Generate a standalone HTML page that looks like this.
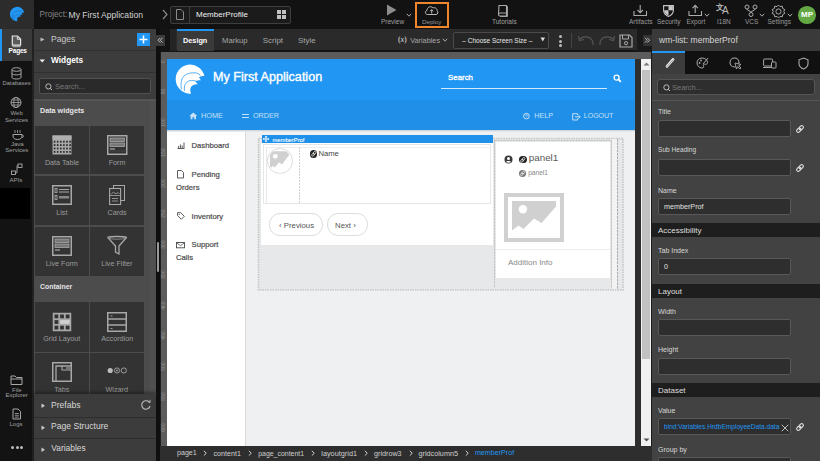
<!DOCTYPE html>
<html><head><meta charset="utf-8">
<style>
*{margin:0;padding:0;box-sizing:border-box}
html,body{width:820px;height:461px;overflow:hidden;background:#121212;font-family:"Liberation Sans",sans-serif}
.a{position:absolute}
.t{position:absolute;white-space:nowrap;line-height:1}
svg{position:absolute;overflow:visible}
</style></head><body>
<!-- TOP BAR -->
<div class="a" style="left:0;top:0;width:820px;height:29px;background:#121212"></div>
<div class="a" style="left:0;top:0;width:34px;height:29px;background:#2c2c2c"></div>


<svg style="left:9.5px;top:7px" width="15" height="15" viewBox="0 0 30 30"><path d="M28.4 11.1 A14.5 14.5 0 1 0 15.1 28.6 C13.8 26 14 22.8 15.5 21.2 C17 19.8 19.5 19 21.8 19.3 C20.8 18 20 17.2 19.4 16.5 C21 15.4 23 15.1 24.9 15.4 C24.2 14 23.6 13 23 12.2 C24.8 11.2 26.6 10.9 28.4 11.1 Z" fill="#2196f3"/><path d="M5.4 24.3 C4.5 19 5 14 8 11 C11 8 17 7.2 21.8 8.3 C23 8.7 23.6 9.6 24.1 10.7" fill="none" stroke="#1a6fb8" stroke-width="1.2"/><path d="M8.5 25.9 C8 22 8.6 19.5 10.5 17.5 C13 15 17.5 15 21 16.5 C21.4 16.9 21.6 17.5 21.8 18.1" fill="none" stroke="#1a6fb8" stroke-width="1.2"/></svg>
<div class="t" style="left:39.5px;top:11.2px;font-size:8.2px;color:#858585">Project:</div>
<div class="t" style="left:68.5px;top:11px;font-size:8.6px;color:#d2d2d2">My First Application</div>
<svg style="left:161px;top:9px" width="8" height="11"><path d="M2 1 L6 5.5 L2 10" fill="none" stroke="#8a8a8a" stroke-width="1.2"/></svg>
<div class="a" style="left:170px;top:6px;width:121px;height:18px;border:1px solid #3e3e3e;border-radius:2px;background:#1b1b1b"></div>
<div class="a" style="left:189px;top:7px;width:1px;height:16px;background:#3e3e3e"></div>
<svg style="left:175px;top:8px" width="10" height="13"><path d="M1.5 1.5 H6 L8.5 4 V11.5 H1.5 Z" fill="none" stroke="#8a8a8a" stroke-width="1"/></svg>
<div class="t" style="left:196px;top:11px;font-size:8px;color:#f0f0f0">MemberProfile</div>
<div class="a" style="left:277px;top:10px;width:4px;height:4px;background:#c0c0c0"></div>
<div class="a" style="left:282px;top:10px;width:4px;height:4px;background:#c0c0c0"></div>
<div class="a" style="left:277px;top:15px;width:4px;height:4px;background:#c0c0c0"></div>
<div class="a" style="left:282px;top:15px;width:4px;height:4px;background:#c0c0c0"></div>

<svg style="left:386px;top:4px" width="12" height="13"><path d="M1 0.5 L10.5 6 L1 11.5 Z" fill="#8c8c8c"/></svg>
<div class="t" style="left:381px;top:18.5px;font-size:6.5px;color:#a0a0a0">Preview</div>
<svg style="left:406px;top:13px" width="7" height="5"><path d="M0.8 0.8 L3 3.2 L5.2 0.8" fill="none" stroke="#aaa" stroke-width="1"/></svg>
<div class="a" style="left:415px;top:2px;width:34px;height:26px;border:2px solid #f0872e"></div>
<svg style="left:424px;top:4px" width="15" height="12"><path d="M3.5 10.5 C1 10.5 0.6 7 3 6.5 C3 3 7 1.5 9 4 C11.5 3 13.5 5 13 7 C14.5 7.5 14 10.5 12 10.5 Z" fill="none" stroke="#bbb" stroke-width="1"/><path d="M7.7 9.5 V5.8 M6.2 7.2 L7.7 5.6 L9.2 7.2" fill="none" stroke="#bbb" stroke-width="1"/></svg>
<div class="t" style="left:422px;top:18.5px;font-size:6.2px;color:#989898">Deploy</div>
<svg style="left:497px;top:4px" width="13" height="13"><path d="M2 1.5 H9.5 V12 H3 C2 12 1.5 11.5 1.5 10.5 Z M1.5 10.5 C1.5 9.5 2 9 3 9 H9.5" fill="none" stroke="#aaa" stroke-width="1.1"/><path d="M9.5 1.5 L10.5 2.5 V12.5 H3" fill="none" stroke="#aaa" stroke-width="0.9"/></svg>
<div class="t" style="left:492px;top:18.5px;font-size:6.5px;color:#a0a0a0">Tutorials</div>

<svg style="left:633px;top:4px" width="15" height="13"><path d="M1 7 V11.5 H13.5 V7" fill="none" stroke="#aaa" stroke-width="1.1"/><path d="M7.2 1 V8.5 M4.5 6 L7.2 8.7 L9.9 6" fill="none" stroke="#aaa" stroke-width="1.1"/></svg>
<div class="t" style="left:629px;top:18.5px;font-size:6.5px;color:#9a9a9a">Artifacts</div>
<svg style="left:662.5px;top:4.5px" width="12" height="13"><path d="M0.6 0.6 H10.4 V5.2 C10.4 8.2 8 10.4 5.5 11.5 C3 10.4 0.6 8.2 0.6 5.2 Z" fill="#151515" stroke="#c4c4c4" stroke-width="1.1"/><path d="M5.5 1.1 H9.9 V5.3 H5.5 Z" fill="#c8c8c8"/><path d="M1.1 5.3 H5.5 V10.8 C3.2 9.8 1.1 7.8 1.1 5.3 Z" fill="#c8c8c8"/></svg>
<div class="t" style="left:657px;top:18.5px;font-size:6.5px;color:#9a9a9a">Security</div>
<svg style="left:688px;top:4px" width="15" height="13"><path d="M1 7 V11.5 H13.5 V7" fill="none" stroke="#aaa" stroke-width="1.1"/><path d="M7.2 9 V1.5 M4.5 4.2 L7.2 1.4 L9.9 4.2" fill="none" stroke="#aaa" stroke-width="1.1"/></svg>
<div class="t" style="left:686.5px;top:18.5px;font-size:6.5px;color:#9a9a9a">Export</div>
<svg style="left:704px;top:13px" width="7" height="5"><path d="M0.8 0.8 L3 3.2 L5.2 0.8" fill="none" stroke="#aaa" stroke-width="1"/></svg>
<div class="t" style="left:716px;top:4px;font-size:8px;color:#bbb;font-weight:bold">文</div>
<div class="t" style="left:722px;top:6px;font-size:10px;color:#bbb">A</div>
<div class="t" style="left:717px;top:18.5px;font-size:6.5px;color:#9a9a9a">I18N</div>
<svg style="left:744px;top:4px" width="14" height="13"><circle cx="3" cy="3" r="2" fill="none" stroke="#aaa" stroke-width="1"/><circle cx="11" cy="3" r="2" fill="none" stroke="#aaa" stroke-width="1"/><circle cx="7" cy="10.5" r="2" fill="none" stroke="#aaa" stroke-width="1"/><path d="M3 5 C3 7 7 6.5 7 8.5 M11 5 C11 7 7 6.5 7 8.5" fill="none" stroke="#aaa" stroke-width="1"/></svg>
<div class="t" style="left:745px;top:18.5px;font-size:6.5px;color:#9a9a9a">VCS</div>
<svg style="left:759px;top:13px" width="7" height="5"><path d="M0.8 0.8 L3 3.2 L5.2 0.8" fill="none" stroke="#aaa" stroke-width="1"/></svg>
<svg style="left:771px;top:4px" width="15" height="14"><path d="M7.5 1 L9 2.6 L11.3 2.2 L11.7 4.5 L13.8 5.6 L12.8 7.5 L13.8 9.4 L11.7 10.5 L11.3 12.8 L9 12.4 L7.5 14 L6 12.4 L3.7 12.8 L3.3 10.5 L1.2 9.4 L2.2 7.5 L1.2 5.6 L3.3 4.5 L3.7 2.2 L6 2.6 Z" fill="none" stroke="#aaa" stroke-width="1"/><circle cx="7.5" cy="7.5" r="2.6" fill="none" stroke="#aaa" stroke-width="1"/></svg>
<div class="t" style="left:767.5px;top:18.5px;font-size:6.5px;color:#9a9a9a">Settings</div>
<svg style="left:787px;top:13px" width="7" height="5"><path d="M0.8 0.8 L3 3.2 L5.2 0.8" fill="none" stroke="#aaa" stroke-width="1"/></svg>
<div class="a" style="left:798px;top:6px;width:17.5px;height:17.5px;border-radius:50%;background:#64a846"></div>
<div class="t" style="left:799px;top:11px;width:16px;text-align:center;font-size:8px;color:#fff;font-weight:bold">MP</div>

<!-- LEFT RAIL -->
<div class="a" style="left:0;top:29px;width:34px;height:432px;background:#131313"></div>
<div class="a" style="left:0;top:29px;width:32px;height:32px;background:#3a3a3a"></div>
<div class="a" style="left:32px;top:29px;width:2.5px;height:432px;background:#222"></div>
<div class="a" style="left:0;top:29px;width:1.5px;height:32px;background:#2196f3"></div>
<div class="a" style="left:0;top:188px;width:30px;height:31px;background:#000"></div>
<svg style="left:11px;top:35px" width="11" height="13"><path d="M1.3 1 H6.5 L9.6 4.1 V10.2 H1.3 Z" fill="#5a5a5a" stroke="#e6e6e6" stroke-width="1.2"/><path d="M6.3 1.2 V4.3 H9.4" fill="none" stroke="#e6e6e6" stroke-width="0.9"/><path d="M1.5 11.6 H9.4" stroke="#aaa" stroke-width="1.3"/></svg>
<div class="t" style="left:8.6px;top:48.3px;font-size:6.6px;color:#fff;font-weight:bold;letter-spacing:-0.25px">Pages</div>
<svg style="left:11px;top:67px" width="12" height="14"><ellipse cx="5.5" cy="2.5" rx="4.5" ry="1.8" fill="none" stroke="#a8a8a8" stroke-width="1"/><path d="M1 2.5 V10.5 C1 12.5 10 12.5 10 10.5 V2.5 M1 6.5 C1 8.3 10 8.3 10 6.5" fill="none" stroke="#a8a8a8" stroke-width="1"/></svg>
<div class="t" style="left:2.5px;top:80.5px;font-size:5.9px;color:#a0a0a0">Databases</div>
<svg style="left:10px;top:97px" width="13" height="12"><circle cx="6" cy="5.5" r="5" fill="none" stroke="#a8a8a8" stroke-width="1"/><ellipse cx="6" cy="5.5" rx="2.2" ry="5" fill="none" stroke="#a8a8a8" stroke-width="0.8"/><path d="M1 5.5 H11 M1.8 3 H10.2 M1.8 8 H10.2" stroke="#a8a8a8" stroke-width="0.8"/></svg>
<div class="t" style="left:10.5px;top:110px;font-size:6px;color:#a0a0a0">Web</div>
<div class="t" style="left:5px;top:116.5px;font-size:6px;color:#a0a0a0">Services</div>
<svg style="left:10.5px;top:129px" width="14" height="12"><path d="M4 1 V4 M6.5 1 V4 M9 1 V4" stroke="#a8a8a8" stroke-width="0.8"/><path d="M2 5.5 H11 V7 C11 9.5 9 10.5 6.5 10.5 C4 10.5 2 9.5 2 7 Z" fill="none" stroke="#a8a8a8" stroke-width="1"/><path d="M11 6 C13 6 13 8.5 11 8.5" fill="none" stroke="#a8a8a8" stroke-width="0.9"/></svg>
<div class="t" style="left:11px;top:141px;font-size:6px;color:#a0a0a0">Java</div>
<div class="t" style="left:5.3px;top:147px;font-size:6px;color:#a0a0a0">Services</div>
<svg style="left:10px;top:163px" width="14" height="13"><rect x="8" y="1" width="4" height="3.5" fill="none" stroke="#a8a8a8" stroke-width="0.9"/><rect x="1.5" y="8" width="4" height="3.5" fill="none" stroke="#a8a8a8" stroke-width="0.9"/><path d="M5.5 9.7 H7 V2.7 H8" fill="none" stroke="#a8a8a8" stroke-width="0.9"/></svg>
<div class="t" style="left:9.5px;top:177px;font-size:6px;color:#a0a0a0">APIs</div>
<svg style="left:10px;top:373.5px" width="14" height="12"><path d="M1 2 H5 L6.5 3.5 H12 V10.5 H1 Z M1 5 H12" fill="none" stroke="#a8a8a8" stroke-width="1"/></svg>
<div class="t" style="left:12px;top:386.6px;font-size:6px;color:#a0a0a0">File</div>
<div class="t" style="left:5.5px;top:392.3px;font-size:6px;color:#a0a0a0">Explorer</div>
<svg style="left:12px;top:407.5px" width="10" height="12"><path d="M1 1 H6 L8.5 3.5 V11 H1 Z" fill="none" stroke="#a8a8a8" stroke-width="1"/><path d="M2.8 5.5 H6.8 M2.8 7.3 H6.8 M2.8 9.1 H6.8" stroke="#a8a8a8" stroke-width="0.8"/></svg>
<div class="t" style="left:9.5px;top:421px;font-size:6px;color:#a0a0a0">Logs</div>
<div class="a" style="left:11px;top:446px;width:3px;height:3px;border-radius:50%;background:#bbb"></div>
<div class="a" style="left:15.5px;top:446px;width:3px;height:3px;border-radius:50%;background:#bbb"></div>
<div class="a" style="left:20px;top:446px;width:3px;height:3px;border-radius:50%;background:#bbb"></div>

<!-- LEFT PANEL -->
<div class="a" style="left:34px;top:29px;width:122px;height:432px;background:#4c4c4c"></div>
<div class="a" style="left:150px;top:99px;width:6px;height:296px;background:#505050"></div>
<div class="a" style="left:34px;top:29px;width:122px;height:70px;background:#3c3c3c"></div>
<div class="a" style="left:34px;top:50px;width:122px;height:1px;background:#303030"></div>
<div class="a" style="left:34px;top:72px;width:122px;height:1px;background:#303030"></div>
<div class="a" style="left:34px;top:98px;width:122px;height:1px;background:#383838"></div>
<div class="a" style="left:34px;top:99px;width:122px;height:2px;background:#555"></div>
<svg style="left:40px;top:37px" width="6" height="6"><path d="M0.5 0.5 L4.5 2.5 L0.5 4.5 Z" fill="#bbb"/></svg>
<div class="t" style="left:51px;top:34.5px;font-size:8.6px;color:#c8c8c8">Pages</div>
<div class="a" style="left:137px;top:33px;width:13px;height:13px;background:#2196f3"></div>
<svg style="left:137px;top:33px" width="13" height="13"><path d="M6.5 2.5 V10.5 M2.5 6.5 H10.5" stroke="#fff" stroke-width="1.5"/></svg>
<svg style="left:39px;top:59px" width="7" height="5"><path d="M0.5 0.5 H6 L3.25 3.5 Z" fill="#eee"/></svg>
<div class="t" style="left:51px;top:56px;font-size:8.3px;color:#fff;font-weight:bold">Widgets</div>
<div class="a" style="left:39px;top:78px;width:112px;height:16px;background:#2a2a2a;border:1px solid #505050;border-radius:2px"></div>
<svg style="left:45px;top:82.5px" width="9" height="9"><circle cx="3.4" cy="3.4" r="2.6" fill="none" stroke="#c8c8c8" stroke-width="0.9"/><path d="M5.3 5.3 L7 7" stroke="#c8c8c8" stroke-width="1"/></svg>
<div class="t" style="left:55px;top:82.5px;font-size:7.5px;color:#777">Search...</div>
<div class="t" style="left:40px;top:106.7px;font-size:7.2px;color:#e6e6e6;font-weight:bold">Data widgets</div>
<div class="t" style="left:40px;top:284.2px;font-size:6.9px;color:#e6e6e6;font-weight:bold">Container</div>
<div class="a" style="left:35px;top:126px;width:54px;height:48px;background:#333"></div>
<div class="a" style="left:90px;top:126px;width:54px;height:48px;background:#333"></div>
<div class="a" style="left:35px;top:176px;width:54px;height:49px;background:#333"></div>
<div class="a" style="left:90px;top:176px;width:54px;height:49px;background:#333"></div>
<div class="a" style="left:35px;top:227px;width:54px;height:49px;background:#333"></div>
<div class="a" style="left:90px;top:227px;width:54px;height:49px;background:#333"></div>
<div class="a" style="left:35px;top:302px;width:54px;height:50px;background:#333"></div>
<div class="a" style="left:90px;top:302px;width:54px;height:50px;background:#333"></div>
<div class="a" style="left:35px;top:353px;width:54px;height:47px;background:#333"></div>
<div class="a" style="left:90px;top:353px;width:54px;height:47px;background:#333"></div>
<div class="t" style="left:22.0px;width:80px;text-align:center;top:159px;font-size:7.2px;color:#9c9c9c">Data Table</div>
<div class="t" style="left:77.05px;width:80px;text-align:center;top:159px;font-size:7.2px;color:#9c9c9c">Form</div>
<div class="t" style="left:21.85px;width:80px;text-align:center;top:209px;font-size:7.2px;color:#9c9c9c">List</div>
<div class="t" style="left:77.1px;width:80px;text-align:center;top:209px;font-size:7.2px;color:#9c9c9c">Cards</div>
<div class="t" style="left:21.85px;width:80px;text-align:center;top:260px;font-size:7.2px;color:#9c9c9c">Live Form</div>
<div class="t" style="left:76.85px;width:80px;text-align:center;top:260px;font-size:7.2px;color:#9c9c9c">Live Filter</div>
<div class="t" style="left:21.75px;width:80px;text-align:center;top:335px;font-size:7.2px;color:#9c9c9c">Grid Layout</div>
<div class="t" style="left:77.19999999999999px;width:80px;text-align:center;top:335px;font-size:7.2px;color:#9c9c9c">Accordion</div>
<div class="t" style="left:21.800000000000004px;width:80px;text-align:center;top:385.5px;font-size:7.2px;color:#9c9c9c">Tabs</div>
<div class="t" style="left:76.75px;width:80px;text-align:center;top:385.5px;font-size:7.2px;color:#9c9c9c">Wizard</div>
<svg style="left:52px;top:134.5px" width="20" height="20"><rect x="0.5" y="0.5" width="19" height="19" fill="#a8a8a8"/><rect x="0.5" y="0.5" width="19" height="4" fill="#b0b0b0"/><rect x="1.8" y="5.8" width="1.6" height="1.8" fill="#2a2a2a"/><rect x="4.9" y="5.8" width="1.6" height="1.8" fill="#2a2a2a"/><rect x="8.0" y="5.8" width="1.6" height="1.8" fill="#2a2a2a"/><rect x="11.100000000000001" y="5.8" width="1.6" height="1.8" fill="#2a2a2a"/><rect x="14.200000000000001" y="5.8" width="1.6" height="1.8" fill="#2a2a2a"/><rect x="17.3" y="5.8" width="1.6" height="1.8" fill="#2a2a2a"/><rect x="1.8" y="9.2" width="1.6" height="1.8" fill="#2a2a2a"/><rect x="4.9" y="9.2" width="1.6" height="1.8" fill="#2a2a2a"/><rect x="8.0" y="9.2" width="1.6" height="1.8" fill="#2a2a2a"/><rect x="11.100000000000001" y="9.2" width="1.6" height="1.8" fill="#2a2a2a"/><rect x="14.200000000000001" y="9.2" width="1.6" height="1.8" fill="#2a2a2a"/><rect x="17.3" y="9.2" width="1.6" height="1.8" fill="#2a2a2a"/><rect x="1.8" y="12.6" width="1.6" height="1.8" fill="#2a2a2a"/><rect x="4.9" y="12.6" width="1.6" height="1.8" fill="#2a2a2a"/><rect x="8.0" y="12.6" width="1.6" height="1.8" fill="#2a2a2a"/><rect x="11.100000000000001" y="12.6" width="1.6" height="1.8" fill="#2a2a2a"/><rect x="14.200000000000001" y="12.6" width="1.6" height="1.8" fill="#2a2a2a"/><rect x="17.3" y="12.6" width="1.6" height="1.8" fill="#2a2a2a"/><rect x="1.8" y="16.0" width="1.6" height="1.8" fill="#2a2a2a"/><rect x="4.9" y="16.0" width="1.6" height="1.8" fill="#2a2a2a"/><rect x="8.0" y="16.0" width="1.6" height="1.8" fill="#2a2a2a"/><rect x="11.100000000000001" y="16.0" width="1.6" height="1.8" fill="#2a2a2a"/><rect x="14.200000000000001" y="16.0" width="1.6" height="1.8" fill="#2a2a2a"/><rect x="17.3" y="16.0" width="1.6" height="1.8" fill="#2a2a2a"/></svg>
<svg style="left:107px;top:134.5px" width="21" height="20"><rect x="0.75" y="0.75" width="19" height="18.5" fill="none" stroke="#a8a8a8" stroke-width="1.5"/><rect x="3" y="3" width="14.5" height="3.5" fill="#777" stroke="#a8a8a8" stroke-width="0.8"/><rect x="3" y="8" width="14.5" height="3.5" fill="#777" stroke="#a8a8a8" stroke-width="0.8"/><path d="M3 14 H8" stroke="#a8a8a8" stroke-width="1.2"/><path d="M1 16 H19.5" stroke="#555" stroke-width="0.6"/></svg>
<svg style="left:52px;top:185px" width="20" height="20"><rect x="0.75" y="0.75" width="18.5" height="18.5" fill="none" stroke="#a8a8a8" stroke-width="1.5"/><rect x="3" y="3.5" width="2" height="4" fill="none" stroke="#a8a8a8" stroke-width="0.9"/><rect x="3" y="10.5" width="2" height="4" fill="none" stroke="#a8a8a8" stroke-width="0.9"/><path d="M7 4.5 H17 M7 7 H17 M7 12.5 H17" stroke="#a8a8a8" stroke-width="1"/><rect x="7" y="11" width="10" height="2.5" fill="#888"/></svg>
<svg style="left:109px;top:185px" width="16" height="20"><rect x="4.5" y="0.5" width="11" height="15" fill="none" stroke="#a8a8a8" stroke-width="1"/><rect x="0.6" y="3.5" width="11" height="16" fill="#333" stroke="#a8a8a8" stroke-width="1.1"/><path d="M2 9.5 L4.5 7 L7 9 L9 7.5 L10.5 9" fill="none" stroke="#a8a8a8" stroke-width="0.8"/><path d="M1 10.5 H11 M3 13.5 H9 M3 16 H9" stroke="#a8a8a8" stroke-width="0.8"/></svg>
<svg style="left:52px;top:235.5px" width="20" height="20"><rect x="0.75" y="0.75" width="18.5" height="18.5" fill="none" stroke="#a8a8a8" stroke-width="1.5"/><rect x="3" y="3" width="14" height="3.5" fill="#777" stroke="#a8a8a8" stroke-width="0.8"/><rect x="3" y="8" width="14" height="3.5" fill="#777" stroke="#a8a8a8" stroke-width="0.8"/><path d="M3 14 H8" stroke="#a8a8a8" stroke-width="1.2"/></svg>
<svg style="left:107px;top:236px" width="21" height="19"><path d="M0.8 1.5 C0.8 0 19.5 0 19.5 1.5 L12 10 V18 L8.5 16 V10 Z" fill="none" stroke="#a8a8a8" stroke-width="1.3"/><ellipse cx="10.1" cy="2" rx="8" ry="1.2" fill="none" stroke="#a8a8a8" stroke-width="0.7"/></svg>
<svg style="left:52px;top:311.5px" width="20" height="20"><rect x="0.75" y="0.75" width="18.5" height="18.5" fill="#a8a8a8"/><rect x="2.5" y="2.5" width="3.8" height="3.8" fill="#333"/><rect x="8.1" y="2.5" width="3.8" height="3.8" fill="#333"/><rect x="13.7" y="2.5" width="3.8" height="3.8" fill="#333"/><rect x="2.5" y="8.1" width="3.8" height="3.8" fill="#333"/><rect x="2.5" y="13.7" width="3.8" height="3.8" fill="#333"/><rect x="8.1" y="13.7" width="3.8" height="3.8" fill="#333"/><rect x="13.7" y="13.7" width="3.8" height="3.8" fill="#333"/><rect x="8.1" y="8.1" width="9.4" height="3.8" fill="#cfcfcf"/></svg>
<svg style="left:107px;top:311.5px" width="20" height="20"><rect x="0.75" y="0.75" width="18.5" height="18.5" fill="none" stroke="#a8a8a8" stroke-width="1.5"/><path d="M1 7 H19 M1 13 H19" stroke="#a8a8a8" stroke-width="1.3"/><path d="M3.5 4 H5.5 M3.5 16.5 H5.5" stroke="#a8a8a8" stroke-width="0.9"/></svg>
<svg style="left:52px;top:362px" width="20" height="20"><rect x="0.75" y="0.75" width="18.5" height="18.5" fill="none" stroke="#a8a8a8" stroke-width="1.5"/><path d="M4 19 V4 H19" fill="none" stroke="#a8a8a8" stroke-width="1.3"/><path d="M10 4 V8 H19" fill="none" stroke="#a8a8a8" stroke-width="1.1"/><rect x="14" y="4.5" width="4" height="3" fill="#777"/></svg>
<svg style="left:107px;top:366.5px" width="20" height="7"><circle cx="3.2" cy="3.5" r="2.6" fill="#bdbdbd"/><circle cx="10" cy="3.5" r="2.6" fill="none" stroke="#a8a8a8" stroke-width="0.9"/><circle cx="10" cy="3.5" r="0.9" fill="#a8a8a8"/><circle cx="16.8" cy="3.5" r="2.6" fill="none" stroke="#a8a8a8" stroke-width="0.9"/></svg>

<div class="a" style="left:34px;top:394px;width:122px;height:67px;background:#3c3c3c;box-shadow:0 -2px 3px rgba(0,0,0,0.35)"></div>
<div class="a" style="left:34px;top:417px;width:122px;height:1px;background:#2e2e2e"></div>
<div class="a" style="left:34px;top:438px;width:122px;height:1px;background:#2e2e2e"></div>
<svg style="left:41px;top:403px" width="5" height="6"><path d="M0.5 0.5 L4 2.7 L0.5 5 Z" fill="#ccc"/></svg>
<div class="t" style="left:51px;top:400.5px;font-size:8.6px;color:#d8d8d8">Prefabs</div>
<svg style="left:140px;top:399px" width="12" height="12"><path d="M9.5 3.8 A4.2 4.2 0 1 0 10 7" fill="none" stroke="#bbb" stroke-width="1.1"/><path d="M7.5 1.5 L10 3.8 L10 0.8" fill="none" stroke="#bbb" stroke-width="1"/></svg>
<svg style="left:41px;top:424.5px" width="5" height="6"><path d="M0.5 0.5 L4 2.7 L0.5 5 Z" fill="#ccc"/></svg>
<div class="t" style="left:51px;top:421.5px;font-size:8.6px;color:#d8d8d8">Page Structure</div>
<svg style="left:41px;top:446.5px" width="5" height="6"><path d="M0.5 0.5 L4 2.7 L0.5 5 Z" fill="#ccc"/></svg>
<div class="t" style="left:51.3px;top:444.3px;font-size:8.4px;color:#d8d8d8">Variables</div>
<div class="a" style="left:156px;top:29px;width:4px;height:432px;background:#0f0f0f"></div>
<div class="a" style="left:157px;top:242px;width:2px;height:30px;background:#9a9a9a;border-radius:1px"></div>

<!-- TOOLBAR -->
<div class="a" style="left:160px;top:29px;width:16px;height:23px;background:#141414"></div>
<div class="a" style="left:170px;top:29px;width:6px;height:21.5px;background:#242424"></div>
<div class="a" style="left:176px;top:29px;width:461px;height:21.5px;background:#2a2a2a"></div>
<div class="a" style="left:176px;top:50px;width:476px;height:2px;background:#141414"></div>
<div class="a" style="left:637px;top:29px;width:15px;height:23px;background:#1a1a1a"></div>
<div class="a" style="left:156px;top:35px;width:9px;height:11px;background:#3a3a3a"></div>
<svg style="left:157px;top:37px" width="7" height="7"><path d="M3.3 0.8 L1 3.2 L3.3 5.6 M5.6 0.8 L3.3 3.2 L5.6 5.6" fill="none" stroke="#b8b8b8" stroke-width="1"/></svg>
<div class="a" style="left:643px;top:35px;width:9px;height:11px;background:#333"></div>
<svg style="left:644px;top:37px" width="7" height="7"><path d="M1 0.8 L3.3 3.2 L1 5.6 M3.3 0.8 L5.6 3.2 L3.3 5.6" fill="none" stroke="#b8b8b8" stroke-width="1"/></svg>
<div class="a" style="left:177px;top:29px;width:37px;height:21.5px;background:#3a3a3a"></div>
<div class="a" style="left:177px;top:29px;width:37px;height:2px;background:#2196f3"></div>
<div class="t" style="left:183px;top:37.42px;font-size:7.3px;color:#fff;font-weight:bold;">Design</div>
<div class="t" style="left:222px;top:37.08px;font-size:7.7px;color:#a8a8a8;font-weight:normal;">Markup</div>
<div class="t" style="left:262.8px;top:36.91px;font-size:7.9px;color:#a8a8a8;font-weight:normal;">Script</div>
<div class="t" style="left:298.1px;top:36.91px;font-size:7.9px;color:#a8a8a8;font-weight:normal;">Style</div>
<div class="t" style="left:398px;top:36.2px;font-size:7.5px;color:#bdbdbd;font-weight:bold;font-family:'Liberation Serif',serif">(<i>x</i>)</div>
<div class="t" style="left:410.2px;top:36.62px;font-size:7.3px;color:#a8a8a8;font-weight:normal;">Variables</div>
<svg style="left:442px;top:38px" width="7" height="5"><path d="M0.8 0.8 L3 3.2 L5.2 0.8" fill="none" stroke="#aaa" stroke-width="1"/></svg>
<div class="a" style="left:453px;top:32px;width:96px;height:17px;background:#252525;border:1px solid #4a4a4a;border-radius:2px"></div>
<div class="t" style="left:462.3px;top:38.20px;font-size:6.5px;color:#e8e8e8;font-weight:normal">– Choose Screen Size –</div>
<svg style="left:540px;top:37px" width="6" height="6"><path d="M0.5 0.5 H5 L2.75 4.5 Z" fill="#ddd"/></svg>
<div class="a" style="left:559px;top:35px;width:3px;height:3px;border-radius:50%;background:#bbb"></div>
<div class="a" style="left:559px;top:39.5px;width:3px;height:3px;border-radius:50%;background:#bbb"></div>
<div class="a" style="left:559px;top:44px;width:3px;height:3px;border-radius:50%;background:#bbb"></div>
<div class="a" style="left:571px;top:33px;width:1px;height:15px;background:#444"></div>
<svg style="left:577px;top:34px" width="18" height="14"><path d="M3 5 C6 2 12 2 15 6 C16 7.5 16.3 9 16 11" fill="none" stroke="#555" stroke-width="1.2"/><path d="M1.5 2 L2.5 6.5 L7 5.5" fill="none" stroke="#555" stroke-width="1.2"/></svg>
<svg style="left:598px;top:34px" width="18" height="14"><path d="M15 5 C12 2 6 2 3 6 C2 7.5 1.7 9 2 11" fill="none" stroke="#555" stroke-width="1.2"/><path d="M16.5 2 L15.5 6.5 L11 5.5" fill="none" stroke="#555" stroke-width="1.2"/></svg>
<svg style="left:619px;top:34px" width="14" height="14"><path d="M1 1 H10.5 L13 3.5 V13 H1 Z" fill="none" stroke="#aaa" stroke-width="1.2"/><path d="M3.5 1 V5 H9.5 V1" fill="none" stroke="#aaa" stroke-width="1"/><circle cx="7" cy="9.2" r="1.6" fill="none" stroke="#aaa" stroke-width="1"/></svg>

<!-- CANVAS FRAME -->
<div class="a" style="left:160px;top:52px;width:492px;height:394px;background:#5c5c5c"></div>
<div class="a" style="left:160px;top:52px;width:1px;height:394px;background:#1e1e1e"></div>
<div class="a" style="left:167px;top:59px;width:468px;height:387px;background:#eff0f2"></div>
<div class="a" style="left:635px;top:59px;width:6px;height:387px;background:#2e2e2e"></div>
<div class="a" style="left:641px;top:59px;width:10px;height:387px;background:#f1f1f1"></div>
<div class="a" style="left:642px;top:70px;width:8px;height:289px;background:#c1c1c1"></div>
<svg style="left:643px;top:62px" width="7" height="5"><path d="M0.5 3.5 L3.5 0.5 L6.5 3.5 Z" fill="#777"/></svg>
<svg style="left:643px;top:438px" width="7" height="5"><path d="M0.5 0.5 L3.5 3.5 L6.5 0.5 Z" fill="#555"/></svg>
<div class="a" style="left:651px;top:52px;width:1px;height:394px;background:#1a1a1a"></div>
<div class="t" style="left:152.5px;top:58.5px;width:20px;text-align:center;font-size:5px;color:#9a9a9a;transform:rotate(-90deg);transform-origin:10px 2.5px">0</div>
<div class="t" style="left:152.5px;top:89.0px;width:20px;text-align:center;font-size:5px;color:#9a9a9a;transform:rotate(-90deg);transform-origin:10px 2.5px">50</div>
<div class="t" style="left:152.5px;top:119.5px;width:20px;text-align:center;font-size:5px;color:#9a9a9a;transform:rotate(-90deg);transform-origin:10px 2.5px">100</div>
<div class="t" style="left:152.5px;top:150.0px;width:20px;text-align:center;font-size:5px;color:#9a9a9a;transform:rotate(-90deg);transform-origin:10px 2.5px">150</div>
<div class="t" style="left:152.5px;top:180.5px;width:20px;text-align:center;font-size:5px;color:#9a9a9a;transform:rotate(-90deg);transform-origin:10px 2.5px">200</div>
<div class="t" style="left:152.5px;top:211.0px;width:20px;text-align:center;font-size:5px;color:#9a9a9a;transform:rotate(-90deg);transform-origin:10px 2.5px">250</div>
<div class="t" style="left:152.5px;top:241.5px;width:20px;text-align:center;font-size:5px;color:#9a9a9a;transform:rotate(-90deg);transform-origin:10px 2.5px">300</div>
<div class="t" style="left:152.5px;top:272.0px;width:20px;text-align:center;font-size:5px;color:#9a9a9a;transform:rotate(-90deg);transform-origin:10px 2.5px">350</div>
<div class="t" style="left:152.5px;top:302.5px;width:20px;text-align:center;font-size:5px;color:#9a9a9a;transform:rotate(-90deg);transform-origin:10px 2.5px">400</div>
<div class="t" style="left:152.5px;top:333.0px;width:20px;text-align:center;font-size:5px;color:#9a9a9a;transform:rotate(-90deg);transform-origin:10px 2.5px">450</div>
<div class="t" style="left:152.5px;top:363.5px;width:20px;text-align:center;font-size:5px;color:#9a9a9a;transform:rotate(-90deg);transform-origin:10px 2.5px">500</div>
<div class="t" style="left:152.5px;top:394.0px;width:20px;text-align:center;font-size:5px;color:#9a9a9a;transform:rotate(-90deg);transform-origin:10px 2.5px">550</div>
<div class="t" style="left:152.5px;top:424.5px;width:20px;text-align:center;font-size:5px;color:#9a9a9a;transform:rotate(-90deg);transform-origin:10px 2.5px">600</div>

<!-- APP HEADER -->
<div class="a" style="left:167px;top:59px;width:468px;height:41px;background:#2196f3"></div>
<div class="a" style="left:167px;top:100px;width:468px;height:30px;background:#1f8fe7"></div>
<div class="a" style="left:167px;top:130px;width:468px;height:2px;background:linear-gradient(#c4cdd6,#eff0f2)"></div>
<div class="t" style="left:213px;top:71.13px;font-size:12.6px;color:#fff;font-weight:normal;-webkit-text-stroke:0.35px #fff">My First Application</div>
<div class="t" style="left:448px;top:74.31px;font-size:7.9px;color:#fff;font-weight:normal;-webkit-text-stroke:0.3px #fff">Search</div>
<div class="a" style="left:441px;top:88px;width:166px;height:1px;background:#d6e9f9"></div>
<svg style="left:613px;top:74px" width="9" height="9"><circle cx="3.6" cy="3.6" r="2.5" fill="none" stroke="#fff" stroke-width="1.3"/><path d="M5.4 5.4 L7.8 7.8" stroke="#fff" stroke-width="1.8"/></svg>
<svg style="left:189px;top:112px" width="9" height="8"><path d="M4.3 0.5 L8.3 4 H7 V7.3 H5.2 V5.2 H3.4 V7.3 H1.6 V4 H0.3 Z" fill="#c6e0f8"/></svg>
<div class="t" style="left:201px;top:112.12px;font-size:7.3px;color:#c6e0f8;font-weight:normal;">HOME</div>
<div class="a" style="left:242px;top:114px;width:6.5px;height:1.3px;background:#c6e0f8"></div><div class="a" style="left:242px;top:116.5px;width:6.5px;height:1.3px;background:#c6e0f8"></div>
<div class="t" style="left:253px;top:112.21px;font-size:7.2px;color:#c6e0f8;font-weight:normal;">ORDER</div>
<svg style="left:523px;top:113px" width="8" height="7"><circle cx="3.4" cy="3.1" r="2.8" fill="none" stroke="#c6e0f8" stroke-width="1"/><path d="M2.4 2.4 C2.4 1.3 4.4 1.3 4.4 2.4 C4.4 3.2 3.4 3.2 3.4 4.1" fill="none" stroke="#c6e0f8" stroke-width="0.8"/></svg>
<div class="t" style="left:534.3px;top:112.31px;font-size:7.2px;color:#c6e0f8;font-weight:normal;">HELP</div>
<svg style="left:572px;top:112.5px" width="9" height="8"><path d="M5.5 2 V0.7 H0.7 V7 H5.5 V5.5" fill="none" stroke="#c6e0f8" stroke-width="1"/><path d="M3 3.8 H8 M6.3 2 L8.2 3.8 L6.3 5.6" fill="none" stroke="#c6e0f8" stroke-width="1"/></svg>
<div class="t" style="left:583.8px;top:112.47px;font-size:7.0px;color:#c6e0f8;font-weight:normal;">LOGOUT</div>
<svg style="left:176px;top:65px" width="30" height="30" viewBox="0 0 30 30"><path d="M28.4 11.1 A14.5 14.5 0 1 0 15.1 28.6 C13.8 26 14 22.8 15.5 21.2 C17 19.8 19.5 19 21.8 19.3 C20.8 18 20 17.2 19.4 16.5 C21 15.4 23 15.1 24.9 15.4 C24.2 14 23.6 13 23 12.2 C24.8 11.2 26.6 10.9 28.4 11.1 Z" fill="#fff"/><path d="M5.4 24.3 C4.5 19 5 14 8 11 C11 8 17 7.2 21.8 8.3 C23 8.7 23.6 9.6 24.1 10.7" fill="none" stroke="#2196f3" stroke-width="0.75"/><path d="M8.5 25.9 C8 22 8.6 19.5 10.5 17.5 C13 15 17.5 15 21 16.5 C21.4 16.9 21.6 17.5 21.8 18.1" fill="none" stroke="#2196f3" stroke-width="0.75"/></svg>

<!-- APP LEFT NAV -->
<div class="a" style="left:167px;top:132px;width:78px;height:314px;background:#fff"></div>
<div class="a" style="left:245px;top:132px;width:1px;height:314px;background:#dadada"></div>
<svg style="left:176.5px;top:142px" width="8" height="7"><path d="M0.5 6.5 H7.5" stroke="#4a4a4a" stroke-width="0.9"/><path d="M1.6 6 V4 M3.4 6 V2.5 M5.2 6 V3.5 M7 6 V0.5" stroke="#4a4a4a" stroke-width="0.9"/></svg>
<div class="t" style="left:191.5px;top:141.88px;font-size:7.7px;color:#4a4a4a;font-weight:normal;-webkit-text-stroke:0.2px #4a4a4a">Dashboard</div>
<svg style="left:177px;top:170px" width="8" height="9"><path d="M0.5 0.5 H4.5 L6.5 2.5 V8 H0.5 Z" fill="none" stroke="#4a4a4a" stroke-width="0.9"/></svg>
<div class="t" style="left:191.5px;top:170.68px;font-size:7.7px;color:#4a4a4a;font-weight:normal;-webkit-text-stroke:0.2px #4a4a4a">Pending</div>
<div class="t" style="left:176px;top:183.78px;font-size:7.7px;color:#4a4a4a;font-weight:normal;-webkit-text-stroke:0.2px #4a4a4a">Orders</div>
<svg style="left:177px;top:212px" width="8" height="8"><path d="M0.6 0.6 H3.6 L7.3 4.3 L4.3 7.3 L0.6 3.6 Z" fill="none" stroke="#4a4a4a" stroke-width="0.9"/><circle cx="2.3" cy="2.3" r="0.6" fill="#4a4a4a"/></svg>
<div class="t" style="left:191.5px;top:212.58px;font-size:7.7px;color:#4a4a4a;font-weight:normal;-webkit-text-stroke:0.2px #4a4a4a">Inventory</div>
<svg style="left:176px;top:242px" width="9" height="6"><rect x="0.5" y="0.5" width="8" height="5.3" fill="none" stroke="#4a4a4a" stroke-width="0.9"/><path d="M1 1 L4.5 3.6 L8 1" fill="none" stroke="#4a4a4a" stroke-width="0.8"/></svg>
<div class="t" style="left:191.5px;top:241.38px;font-size:7.7px;color:#4a4a4a;font-weight:normal;-webkit-text-stroke:0.2px #4a4a4a">Support</div>
<div class="t" style="left:176px;top:254.38px;font-size:7.7px;color:#4a4a4a;font-weight:normal;-webkit-text-stroke:0.2px #4a4a4a">Calls</div>

<!-- OUTER GRID -->
<div class="a" style="left:258px;top:138px;width:365px;height:152px;background:#e7e8e9"></div>
<svg style="left:257px;top:137px" width="367" height="154"><rect x="1.5" y="1.5" width="364.5" height="151.5" fill="none" stroke="#c6c6c6" stroke-width="1.6" stroke-dasharray="1.5 1"/></svg>
<div class="a" style="left:612px;top:139px;width:5px;height:150px;background:#f3f3f4"></div>
<svg style="left:617px;top:139px" width="1" height="150"><path d="M0.5 0 V150" stroke="#aaaaaa" stroke-width="1" stroke-dasharray="2.5 1"/></svg>
<div class="a" style="left:261px;top:143px;width:232px;height:102px;background:#fff"></div>
<div class="a" style="left:263px;top:144px;width:228px;height:60px;border:1px solid #e6e6e6"></div>
<div class="a" style="left:266px;top:147px;width:223px;height:56px;border-left:1px solid #e8e8e8;border-top:1px solid #eee"></div>
<svg style="left:299px;top:147px" width="1" height="56"><path d="M0.5 0 V56" stroke="#cfcfcf" stroke-width="1" stroke-dasharray="2 1"/></svg>
<div class="a" style="left:262px;top:135px;width:231px;height:8px;background:#1f91ea"></div>
<div class="a" style="left:262px;top:142.5px;width:231px;height:1px;border-top:1px dashed rgba(255,255,255,0.8)"></div>
<svg style="left:263.3px;top:136px" width="6" height="6"><path d="M3 0.3 V5.7 M0.3 3 H5.7" stroke="#fff" stroke-width="0.9"/><path d="M1.9 1.2 L3 0.2 L4.1 1.2 M1.9 4.8 L3 5.8 L4.1 4.8 M1.2 1.9 L0.2 3 L1.2 4.1 M4.8 1.9 L5.8 3 L4.8 4.1" fill="none" stroke="#fff" stroke-width="0.8"/></svg>
<div class="t" style="left:272.5px;top:137.69px;font-size:5.8px;color:#fff;font-weight:normal;-webkit-text-stroke:0.1px #fff">memberProf</div>
<div class="a" style="left:267px;top:148px;width:25.5px;height:25.5px;border-radius:50%;border:1px solid #dcdcdc;background:#fff"></div>
<svg style="left:267px;top:148px" width="26" height="26" viewBox="0 0 26 26"><defs><clipPath id="cp1"><circle cx="12.75" cy="12.75" r="11.3"/></clipPath></defs><g clip-path="url(#cp1)"><path d="M3 3.2 H22.5 V6.5 L15 16.5 L12 14.3 L7.8 19.5 L5.8 18 L3 20.5 Z" fill="#d0d0d0"/><circle cx="8.3" cy="8.3" r="2.4" fill="#fff"/></g></svg>
<div class="a" style="left:309.6px;top:150.2px;width:7.6px;height:7.6px;border-radius:50%;background:#222"></div>
<svg style="left:309.6px;top:150.2px" width="7.6" height="7.6" viewBox="0 0 7.6 7.6"><g transform="rotate(-50 3.8 3.8)"><rect x="1.06" y="2.74" width="3.19" height="2.13" rx="1.06" fill="none" stroke="#fff" stroke-width="0.7"/><rect x="3.34" y="2.74" width="3.19" height="2.13" rx="1.06" fill="none" stroke="#fff" stroke-width="0.7"/></g></svg>
<div class="t" style="left:318.4px;top:150.18px;font-size:7.7px;color:#444;font-weight:normal;">Name</div>
<div class="a" style="left:269px;top:213px;width:54px;height:22.5px;border:1px solid #ddd;border-radius:11px;background:#fff"></div>
<div class="a" style="left:327px;top:213px;width:40.5px;height:22.5px;border:1px solid #ddd;border-radius:11px;background:#fff"></div>
<div class="t" style="left:279px;top:221.80px;font-size:7.8px;color:#555;font-weight:normal;">&#8249; Previous</div>
<div class="t" style="left:335px;top:221.80px;font-size:7.8px;color:#555;font-weight:normal;">Next &#8250;</div>

<svg style="left:494px;top:140px" width="119" height="149"><path d="M0.5 0.5 H117.5 M0.5 0.5 V148 M117.5 0.5 V148" fill="none" stroke="#bdbdbd" stroke-width="1" stroke-dasharray="2 1"/></svg>
<div class="a" style="left:496px;top:142px;width:114px;height:136px;background:#fff"></div>
<svg style="left:504px;top:154.5px" width="9" height="9"><circle cx="4.5" cy="4.5" r="4" fill="#3a3a3a"/><circle cx="4.5" cy="3.5" r="1.5" fill="#fff"/><path d="M2 7.1 C2.4 5.6 6.6 5.6 7 7.1 C6.3 7.8 2.7 7.8 2 7.1 Z" fill="#fff"/></svg>
<div class="a" style="left:519px;top:155.6px;width:7.6px;height:7.6px;border-radius:50%;background:#222"></div>
<svg style="left:519px;top:155.6px" width="7.6" height="7.6" viewBox="0 0 7.6 7.6"><g transform="rotate(-50 3.8 3.8)"><rect x="1.06" y="2.74" width="3.19" height="2.13" rx="1.06" fill="none" stroke="#fff" stroke-width="0.7"/><rect x="3.34" y="2.74" width="3.19" height="2.13" rx="1.06" fill="none" stroke="#fff" stroke-width="0.7"/></g></svg>
<div class="t" style="left:528.8px;top:153.30px;font-size:9.8px;color:#555;font-weight:normal;">panel1</div>
<div class="a" style="left:519px;top:169.8px;width:7px;height:7px;border-radius:50%;background:#7a7a7a"></div>
<svg style="left:519px;top:169.8px" width="7" height="7" viewBox="0 0 7 7"><g transform="rotate(-50 3.5 3.5)"><rect x="0.98" y="2.52" width="2.94" height="1.96" rx="0.98" fill="none" stroke="#fff" stroke-width="0.65"/><rect x="3.08" y="2.52" width="2.94" height="1.96" rx="0.98" fill="none" stroke="#fff" stroke-width="0.65"/></g></svg>
<div class="t" style="left:528.2px;top:170.31px;font-size:6.6px;color:#888;font-weight:normal;">panel1</div>
<div class="a" style="left:504px;top:193px;width:60px;height:49px;background:#d0d0d0"></div>
<div class="a" style="left:508px;top:197px;width:52px;height:41px;background:#fff"></div>
<svg style="left:512px;top:200.5px" width="44" height="30"><path d="M0 0 H44 V5.5 L29.5 22 L22 17.5 L11.5 28 L6.5 24.5 L0 29.5 Z" fill="#d0d0d0"/><circle cx="10.9" cy="8.3" r="4.2" fill="#fff"/></svg>
<div class="a" style="left:496px;top:249px;width:114px;height:1px;background:#ececec"></div>
<div class="t" style="left:508px;top:259.03px;font-size:8.0px;color:#8a8a8a;font-weight:normal;">Addition Info</div>

<!-- BREADCRUMB -->
<div class="a" style="left:160px;top:446px;width:492px;height:15px;background:#2e2e2e"></div>
<div class="t" style="left:177px;top:450.49px;font-size:7.1px;color:#cfcfcf;font-weight:normal;">page1</div>
<div class="t" style="left:213.4px;top:450.41px;font-size:7.2px;color:#cfcfcf;font-weight:normal;">content1</div>
<div class="t" style="left:258.2px;top:450.62px;font-size:6.95px;color:#cfcfcf;font-weight:normal;">page_content1</div>
<div class="t" style="left:321.3px;top:450.32px;font-size:7.3px;color:#cfcfcf;font-weight:normal;">layoutgrid1</div>
<div class="t" style="left:374px;top:450.41px;font-size:7.2px;color:#cfcfcf;font-weight:normal;">gridrow3</div>
<div class="t" style="left:418.5px;top:450.36px;font-size:7.25px;color:#cfcfcf;font-weight:normal;">gridcolumn5</div>
<div class="t" style="left:474.9px;top:450.45px;font-size:7.15px;color:#2196f3;font-weight:normal;">memberProf</div>
<svg style="left:203px;top:450px" width="5" height="7"><path d="M0.8 0.8 L3.3 3.2 L0.8 5.6" fill="none" stroke="#d0d0d0" stroke-width="1"/></svg>
<svg style="left:248.3px;top:450px" width="5" height="7"><path d="M0.8 0.8 L3.3 3.2 L0.8 5.6" fill="none" stroke="#d0d0d0" stroke-width="1"/></svg>
<svg style="left:311.4px;top:450px" width="5" height="7"><path d="M0.8 0.8 L3.3 3.2 L0.8 5.6" fill="none" stroke="#d0d0d0" stroke-width="1"/></svg>
<svg style="left:363.7px;top:450px" width="5" height="7"><path d="M0.8 0.8 L3.3 3.2 L0.8 5.6" fill="none" stroke="#d0d0d0" stroke-width="1"/></svg>
<svg style="left:408.6px;top:450px" width="5" height="7"><path d="M0.8 0.8 L3.3 3.2 L0.8 5.6" fill="none" stroke="#d0d0d0" stroke-width="1"/></svg>
<svg style="left:465px;top:450px" width="5" height="7"><path d="M0.8 0.8 L3.3 3.2 L0.8 5.6" fill="none" stroke="#d0d0d0" stroke-width="1"/></svg>

<!-- RIGHT PANEL -->
<div class="a" style="left:652px;top:29px;width:168px;height:22px;background:#3a3a3a"></div>
<div class="a" style="left:652px;top:51px;width:168px;height:23px;background:#111"></div>
<div class="a" style="left:652px;top:51px;width:33px;height:23px;background:#3c3c3c"></div>
<div class="a" style="left:652px;top:51px;width:33px;height:2px;background:#2196f3"></div>
<div class="a" style="left:652px;top:74px;width:168px;height:387px;background:#424242"></div>
<div class="a" style="left:652px;top:100px;width:168px;height:1px;background:#555"></div>
<div class="t" style="left:659px;top:35.72px;font-size:8.6px;color:#d5d5d5;font-weight:normal;">wm-list: memberProf</div>
<svg style="left:664px;top:57px" width="11" height="12"><path d="M2.5 11 L1.5 9 L8 1.5 C8.7 0.8 9.8 0.9 10.2 1.7 C10.6 2.3 10.4 3 10 3.5 L3.5 10.8 Z" fill="#e6e6e6"/><path d="M2.5 10 L9.5 2.5" stroke="#666" stroke-width="0.6"/></svg>
<svg style="left:696px;top:57px" width="13" height="12"><path d="M6 1 C9 1 11.5 3 11.5 5.5 C11.5 7.5 9.5 7.5 8.5 7.2 C7.3 7 7 8 7.5 9 C8 10 7.5 11 6 11 C3 11 1 8.5 1 6 C1 3.2 3 1 6 1 Z" fill="none" stroke="#a8a8a8" stroke-width="1"/><circle cx="3.6" cy="6" r="0.9" fill="#a8a8a8"/><circle cx="5" cy="3.5" r="0.9" fill="#a8a8a8"/><path d="M12 1 L7 7" stroke="#a8a8a8" stroke-width="1"/></svg>
<svg style="left:729px;top:57px" width="13" height="13"><circle cx="5.5" cy="5.5" r="4.5" fill="none" stroke="#a8a8a8" stroke-width="1.1"/><path d="M6 6 L7.5 12 L8.7 9.7 L11 12 L12 11 L9.7 8.7 L12 7.5 Z" fill="#111" stroke="#a8a8a8" stroke-width="0.9"/></svg>
<svg style="left:763px;top:58px" width="14" height="11"><rect x="0.6" y="1" width="9" height="7" rx="0.8" fill="none" stroke="#a8a8a8" stroke-width="1"/><path d="M0 9.5 H9" stroke="#a8a8a8" stroke-width="1"/><rect x="8.5" y="4" width="4.5" height="6" rx="0.6" fill="#111" stroke="#a8a8a8" stroke-width="1"/></svg>
<svg style="left:798px;top:57px" width="11" height="13"><path d="M5.5 1 L10 2.8 V6.5 C10 9 8 11 5.5 12 C3 11 1 9 1 6.5 V2.8 Z" fill="none" stroke="#a8a8a8" stroke-width="1.1"/></svg>
<div class="a" style="left:657px;top:79px;width:158px;height:16px;background:#2e2e2e;border:1px solid #555;border-radius:3px"></div>
<svg style="left:663px;top:83.5px" width="9" height="9"><circle cx="3.4" cy="3.4" r="2.6" fill="none" stroke="#c8c8c8" stroke-width="0.9"/><path d="M5.3 5.3 L7 7" stroke="#c8c8c8" stroke-width="1"/></svg>
<div class="t" style="left:672px;top:83.65px;font-size:7.5px;color:#777;font-weight:normal;">Search...</div>
<div class="t" style="left:658px;top:108.37px;font-size:7.0px;color:#d8d8d8;font-weight:normal;">Title</div>
<div class="a" style="left:658px;top:120px;width:133px;height:17px;background:#2e2e2e;border:1px solid #585858;border-radius:2px"></div>
<svg style="left:795.3px;top:123.8px" width="10" height="10"><g transform="rotate(-45 5 5)"><rect x="0.9" y="3.4" width="4.8" height="3.2" rx="1.6" fill="none" stroke="#dedede" stroke-width="1.1"/><rect x="4.3" y="3.4" width="4.8" height="3.2" rx="1.6" fill="none" stroke="#dedede" stroke-width="1.1"/></g></svg>
<div class="t" style="left:658px;top:147.21px;font-size:6.6px;color:#d8d8d8;font-weight:normal;">Sub Heading</div>
<div class="a" style="left:658px;top:159px;width:133px;height:17px;background:#2e2e2e;border:1px solid #585858;border-radius:2px"></div>
<svg style="left:795.3px;top:162.8px" width="10" height="10"><g transform="rotate(-45 5 5)"><rect x="0.9" y="3.4" width="4.8" height="3.2" rx="1.6" fill="none" stroke="#dedede" stroke-width="1.1"/><rect x="4.3" y="3.4" width="4.8" height="3.2" rx="1.6" fill="none" stroke="#dedede" stroke-width="1.1"/></g></svg>
<div class="t" style="left:658px;top:186.57px;font-size:7px;color:#d8d8d8;font-weight:normal;">Name</div>
<div class="a" style="left:658px;top:198px;width:133px;height:17px;background:#2e2e2e;border:1px solid #585858;border-radius:2px"></div>
<div class="t" style="left:664px;top:202.91px;font-size:7.2px;color:#e0e0e0;font-weight:normal;">memberProf</div>
<div class="a" style="left:652px;top:223px;width:168px;height:14px;background:#1e1e1e"></div>
<div class="t" style="left:658px;top:226.72px;font-size:8px;color:#dedede;font-weight:normal;">Accessibility</div>
<div class="t" style="left:658px;top:246.77px;font-size:7px;color:#d8d8d8;font-weight:normal;">Tab Index</div>
<div class="a" style="left:658px;top:258px;width:133px;height:17px;background:#2e2e2e;border:1px solid #585858;border-radius:2px"></div>
<div class="t" style="left:664px;top:263.41px;font-size:7.2px;color:#e0e0e0;font-weight:normal;">0</div>
<div class="a" style="left:652px;top:284px;width:168px;height:14px;background:#1e1e1e"></div>
<div class="t" style="left:658px;top:287.72px;font-size:8px;color:#dedede;font-weight:normal;">Layout</div>
<div class="t" style="left:658px;top:308.07px;font-size:7px;color:#d8d8d8;font-weight:normal;">Width</div>
<div class="a" style="left:658px;top:319px;width:133px;height:17px;background:#2e2e2e;border:1px solid #585858;border-radius:2px"></div>
<div class="t" style="left:658px;top:346.07px;font-size:7.0px;color:#d8d8d8;font-weight:normal;">Height</div>
<div class="a" style="left:658px;top:357.5px;width:133px;height:17px;background:#2e2e2e;border:1px solid #585858;border-radius:2px"></div>
<div class="a" style="left:652px;top:383px;width:168px;height:14px;background:#1e1e1e"></div>
<div class="t" style="left:658px;top:386.72px;font-size:8px;color:#dedede;font-weight:normal;">Dataset</div>
<div class="t" style="left:658px;top:407.07px;font-size:7px;color:#d8d8d8;font-weight:normal;">Value</div>
<div class="a" style="left:658px;top:418px;width:133px;height:17px;background:#2e2e2e;border:1px solid #585858;border-radius:2px"></div>
<svg style="left:795.3px;top:421.8px" width="10" height="10"><g transform="rotate(-45 5 5)"><rect x="0.9" y="3.4" width="4.8" height="3.2" rx="1.6" fill="none" stroke="#dedede" stroke-width="1.1"/><rect x="4.3" y="3.4" width="4.8" height="3.2" rx="1.6" fill="none" stroke="#dedede" stroke-width="1.1"/></g></svg>
<div class="t" style="left:664px;top:423.91px;font-size:6.6px;color:#2196f3;font-weight:normal;">bind:Variables.HrdbEmployeeData.data</div>
<svg style="left:781px;top:423.5px" width="8" height="8"><path d="M0.7 0.7 L7.3 7.3 M7.3 0.7 L0.7 7.3" stroke="#d0d0d0" stroke-width="0.9"/></svg>
<div class="t" style="left:658px;top:446.07px;font-size:7px;color:#d8d8d8;font-weight:normal;">Group by</div>
<div class="a" style="left:658px;top:457px;width:133px;height:17px;background:#2e2e2e;border:1px solid #585858;border-radius:2px"></div>

</body></html>
